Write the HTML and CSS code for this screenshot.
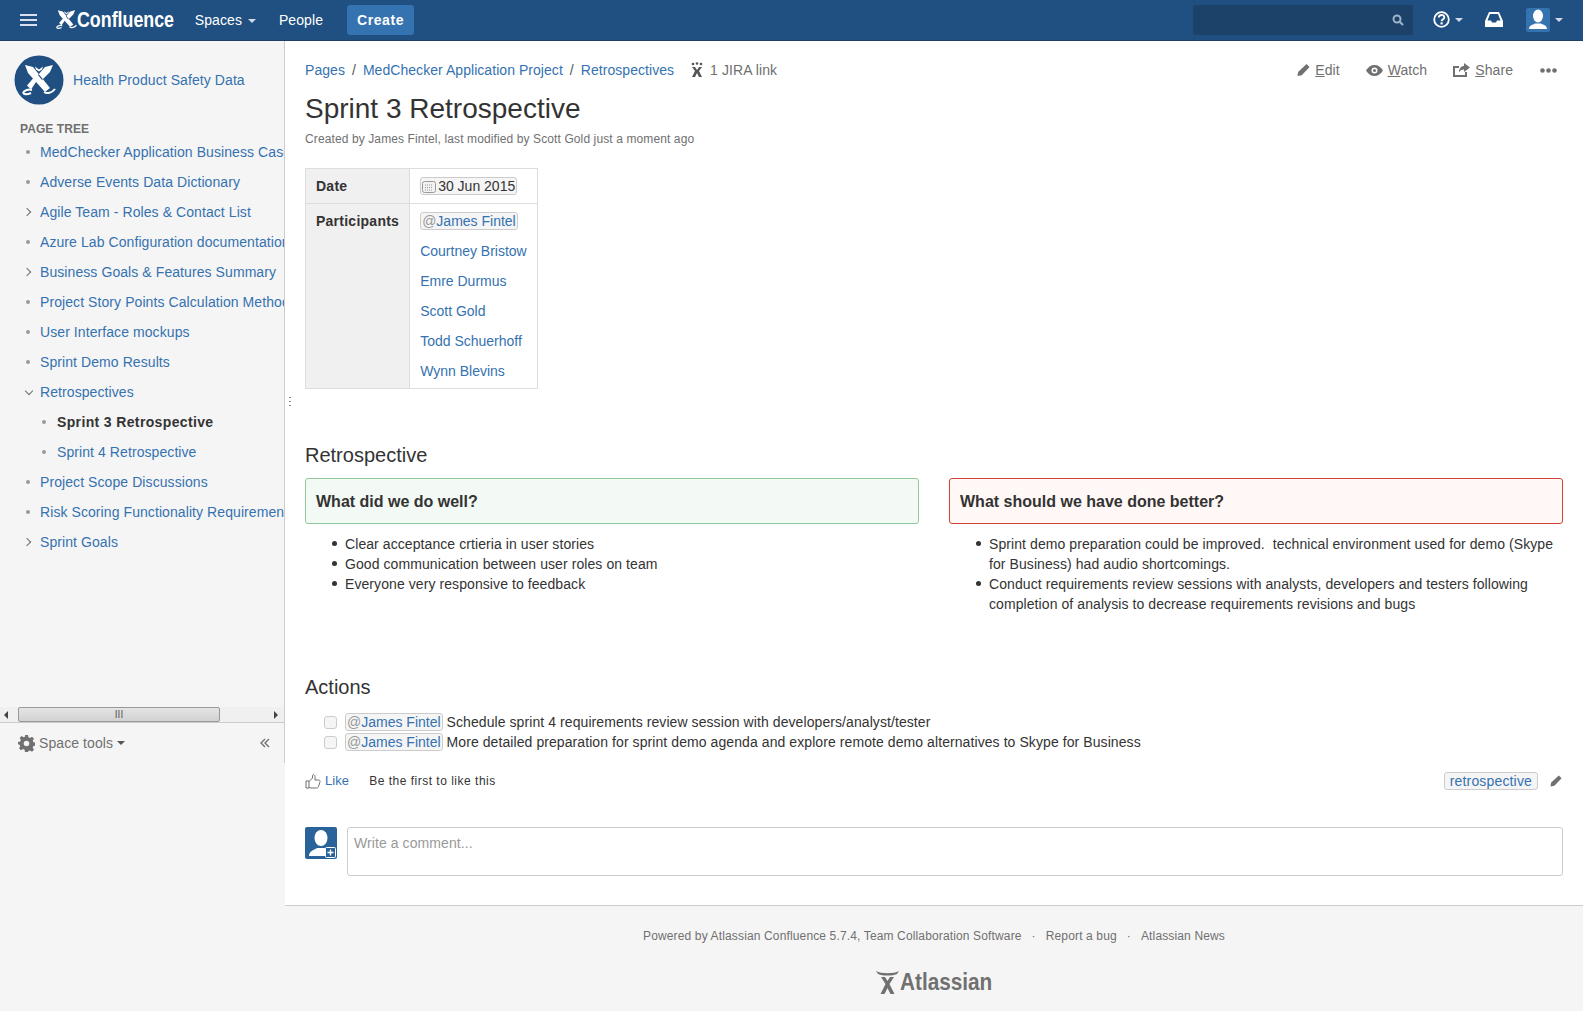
FILE: index.html
```html
<!DOCTYPE html>
<html lang="en">
  <head>
    <meta charset="UTF-8" />
    <meta name="viewport" content="width=device-width, initial-scale=1.0" />
    <title>Sprint 3 Retrospective</title>
    <link rel="stylesheet" href="styles.css">
  </head>
  <body>
    <!-- top bar -->
    <header class="topbar">
      <svg class="burger" width="17" height="12" viewBox="0 0 17 12"><path d="M0 1h17M0 6h17M0 11h17" stroke="#d7e2ee" stroke-width="2"/></svg>
      <a class="brand">
        <svg class="brand-mark" width="21" height="21" viewBox="8 9 34 32">
          <path id="mark" d="M11 10l8 2 17 21-5 4-17-19zM39 10l-8 2-7 8 4 5 8-8zM22 27l-3-3.500-6 7 4 4zM21 11.500l4 3 4-3-1 3-3 2-3-2z" fill="#fff"/>
          <path d="M9 38c1-3 6-4 9-3M9 38c2 2 6 1 8 0M30 37c3 2 8 1 11-3" fill="none" stroke="#fff" stroke-width="2"/>
        </svg>
        <span>Confluence</span>
      </a>
      <nav class="topnav">
        <a>Spaces <i class="caret"></i></a>
        <a>People</a>
        <a class="create">Create</a>
      </nav>
      <div class="topright">
        <div class="search">
          <svg width="12" height="12" viewBox="0 0 12 12"><circle cx="5" cy="5" r="3.500" fill="none" stroke="#9fb3c8" stroke-width="2"/><path d="M7.500 7.500l3.500 3.500" stroke="#9fb3c8" stroke-width="2.200"/></svg>
        </div>
        <a class="topicon help">
          <svg width="17" height="17" viewBox="0 0 17 17"><circle cx="8.500" cy="8.500" r="7.300" fill="none" stroke="#fff" stroke-width="1.800"/><path d="M5.800 6.600c0-3.400 5.500-3.400 5.500-.200 0 1.900-2.700 1.900-2.700 3.900" fill="none" stroke="#fff" stroke-width="1.900"/><path d="M7.500 11.300h2.200v2.100H7.500z" fill="#fff"/></svg>
          <i class="caret"></i>
        </a>
        <a class="topicon inbox">
          <svg width="18" height="15" viewBox="0 0 18 15"><path d="M4 0h10l4 9v6H0V9zM5 2L2.500 8.500h3.500l1 2h4l1-2h3.500L13 2z" fill="#fff" fill-rule="evenodd"/></svg>
        </a>
        <a class="topicon user">
          <span class="user-pic">
            <svg width="24" height="24" viewBox="0 0 24 24"><ellipse cx="12" cy="8" rx="5" ry="6.500" fill="#fff"/><path d="M3 21c0-4 4-4 6-5.500h6c2 1.500 6 1.500 6 5.500z" fill="#fff"/></svg>
          </span>
          <i class="caret"></i>
        </a>
      </div>
    </header>

    <div class="layout">
      <!-- left side -->
      <aside class="sidebar">
        <div class="sidebar-inner">
          <div class="space-head">
            <svg width="50" height="50" viewBox="0 0 50 50">
              <circle cx="25" cy="25" r="24.500" fill="#205081"/>
              <path d="M11 10l8 2 17 21-5 4-17-19zM39 10l-8 2-7 8 4 5 8-8zM22 27l-3-3.500-6 7 4 4zM21 11.500l4 3 4-3-1 3-3 2-3-2z" fill="#fff"/>
              <path d="M9 38c1-3 6-4 9-3M9 38c2 2 6 1 8 0M30 37c3 2 8 1 11-3" fill="none" stroke="#fff" stroke-width="2"/>
            </svg>
            <a>Health Product Safety Data</a>
          </div>
          <h5 class="tree-title">PAGE TREE</h5>
          <ul class="tree">
            <li><i class="dot"></i><a>MedChecker Application Business Case</a></li>
            <li><i class="dot"></i><a>Adverse Events Data Dictionary</a></li>
            <li><i class="chev"></i><a>Agile Team - Roles &amp; Contact List</a></li>
            <li><i class="dot"></i><a>Azure Lab Configuration documentation</a></li>
            <li><i class="chev"></i><a>Business Goals &amp; Features Summary</a></li>
            <li><i class="dot"></i><a>Project Story Points Calculation Method</a></li>
            <li><i class="dot"></i><a>User Interface mockups</a></li>
            <li><i class="dot"></i><a>Sprint Demo Results</a></li>
            <li><i class="chev open"></i><a>Retrospectives</a></li>
            <li class="sub current"><i class="dot"></i><a>Sprint 3 Retrospective</a></li>
            <li class="sub"><i class="dot"></i><a>Sprint 4 Retrospective</a></li>
            <li><i class="dot"></i><a>Project Scope Discussions</a></li>
            <li><i class="dot"></i><a>Risk Scoring Functionality Requirements</a></li>
            <li><i class="chev"></i><a>Sprint Goals</a></li>
          </ul>
          <div class="hscroll">
            <i class="arrow-left"></i>
            <div class="thumb"><span>III</span></div>
            <i class="arrow-right"></i>
          </div>
          <div class="space-tools">
            <svg width="17" height="17" viewBox="0 0 17 17"><path d="M7 0h3l.4 2.300 1.600.7 2-1.300 2 2-1.300 2 .7 1.600 2.300.4v3l-2.300.4-.7 1.600 1.300 2-2 2-2-1.300-1.600.7L10 17H7l-.4-2.300-1.600-.7-2 1.300-2-2 1.300-2-.7-1.600L-.1 9.300V7l2.300-.4.7-1.600-1.300-2 2-2 2 1.300 1.600-.7zM8.500 5.700a2.800 2.800 0 100 5.600 2.800 2.800 0 000-5.600z" fill="#707070" fill-rule="evenodd"/></svg>
            <span>Space tools</span><i class="caret dark"></i>
            <svg class="collapse" width="10" height="10" viewBox="0 0 10 10"><path d="M5 1L1 5l4 4M9 1L5 5l4 4" fill="none" stroke="#707070" stroke-width="1.400"/></svg>
          </div>
        </div>
      </aside>

      <div class="splitter"></div>

      <main class="main">
        <div class="content">
          <div class="page-top">
            <ol class="crumbs">
              <li><a>Pages</a></li>
              <li>/</li>
              <li><a>MedChecker Application Project</a></li>
              <li>/</li>
              <li><a>Retrospectives</a></li>
            </ol>
            <span class="jira">
              <svg width="14" height="16" viewBox="0 0 14 16"><circle cx="3" cy="2" r="1.300" fill="#555"/><circle cx="7" cy="1.500" r="1.300" fill="#555"/><circle cx="11" cy="2" r="1.300" fill="#555"/><path d="M2 5h3l2 3 2-3h3L9 9l3 6H9L7 11l-2 4H2l3-6z" fill="#555"/></svg>
              1 JIRA link
            </span>
            <div class="page-actions">
              <a><svg width="13" height="14" viewBox="0 0 15 15"><path d="M11 .5l3.500 3.500-9 9.500L.5 14.500l1-5z" fill="#707070"/></svg><span><u>E</u>dit</span></a>
              <a><svg width="17" height="11" viewBox="0 0 17 11"><path d="M0 5.500C2 2 5 0 8.500 0S15 2 17 5.500C15 9 12 11 8.500 11S2 9 0 5.500zM8.500 2.500a3 3 0 100 6 3 3 0 000-6z" fill="#707070" fill-rule="evenodd"/><circle cx="8.500" cy="5.500" r="1.500" fill="#707070"/></svg><span><u>W</u>atch</span></a>
              <a><svg width="17" height="14" viewBox="0 0 17 14"><path d="M0 3h6v2H2v7h10V9h2v5H0z" fill="#707070"/><path d="M11 0l6 4.500-6 4.500V6.500c-2.500 0-4 1-5 3 0-4 2-6.500 5-6.500z" fill="#707070"/></svg><span><u>S</u>hare</span></a>
              <a class="more"><svg width="17" height="5" viewBox="0 0 17 5"><circle cx="2.500" cy="2.500" r="2.300" fill="#707070"/><circle cx="8.500" cy="2.500" r="2.300" fill="#707070"/><circle cx="14.500" cy="2.500" r="2.300" fill="#707070"/></svg></a>
            </div>
          </div>

          <h1 class="page-title">Sprint 3 Retrospective</h1>
          <p class="byline">Created by James Fintel, last modified by Scott Gold just a moment ago</p>

          <table class="meta">
            <tr>
              <th>Date</th>
              <td>
                <span class="lozenge date">
                  <svg width="14" height="13" viewBox="0 0 14 13"><rect x=".5" y="1.500" width="13" height="11" rx="2" fill="#f2f2f2" stroke="#999"/><path d="M3 5h8M3 7.500h8M3 10h8" stroke="#999" stroke-dasharray="1 1"/></svg>30 Jun 2015
                </span>
              </td>
            </tr>
            <tr>
              <th>Participants</th>
              <td class="people">
                <div><a class="lozenge mention"><em>@</em>James Fintel</a></div>
                <div><a>Courtney Bristow</a></div>
                <div><a>Emre Durmus</a></div>
                <div><a>Scott Gold</a></div>
                <div><a>Todd Schuerhoff</a></div>
                <div><a>Wynn Blevins</a></div>
              </td>
            </tr>
          </table>

          <h2 class="section retro-head">Retrospective</h2>
          <div class="columns">
            <div>
              <div class="panel good"><h3>What did we do well?</h3></div>
              <ul class="notes">
                <li>Clear acceptance crtieria in user stories</li>
                <li>Good communication between user roles on team</li>
                <li>Everyone very responsive to feedback</li>
              </ul>
            </div>
            <div>
              <div class="panel bad"><h3>What should we have done better?</h3></div>
              <ul class="notes">
                <li>Sprint demo preparation could be improved.&nbsp; technical environment used for demo (Skype for Business) had audio shortcomings.</li>
                <li>Conduct requirements review sessions with analysts, developers and testers following completion of analysis to decrease requirements revisions and bugs</li>
              </ul>
            </div>
          </div>

          <h2 class="section actions-head">Actions</h2>
          <ul class="tasks">
            <li><i class="check"></i><a class="lozenge mention"><em>@</em>James Fintel</a> Schedule sprint 4 requirements review session with developers/analyst/tester</li>
            <li><i class="check"></i><a class="lozenge mention"><em>@</em>James Fintel</a> More detailed preparation for sprint demo agenda and explore remote demo alternatives to Skype for Business</li>
          </ul>

          <div class="like-row">
            <a class="like">
              <svg width="16" height="15" viewBox="0 0 16 15"><path d="M1 7h3v7H1zM4 7.500L7.500 4V1.500c0-1.500 2.500-1 2.500 1V6h3.500c1.500 0 1.800 1.200 1.300 2.500l-1.300 4c-.3 1-1 1.500-2 1.500H6c-1 0-1.500-.5-2-1" fill="none" stroke="#707070"/></svg>
              Like
            </a>
            <span class="like-note">Be the first to like this</span>
            <div class="labels">
              <a class="tag">retrospective</a>
              <svg width="12" height="12" viewBox="0 0 15 15"><path d="M11 .5l3.500 3.500-9 9.500L.5 14.500l1-5z" fill="#707070"/></svg>
            </div>
          </div>

          <div class="comment-row">
            <span class="comment-pic">
              <svg width="32" height="32" viewBox="0 0 32 32"><rect width="32" height="32" rx="2" fill="#2a6399"/><ellipse cx="16" cy="11" rx="6.500" ry="8" fill="#fff"/><path d="M4 29c0-5 5-6 8-8h8c3 2 8 3 8 8z" fill="#fff"/><rect x="20.500" y="20.500" width="10" height="10" rx="1" fill="#2a6399" stroke="#fff"/><path d="M25.500 22.500v6M22.500 25.500h6" stroke="#fff" stroke-width="1.400"/></svg>
            </span>
            <div class="comment-box">Write a comment...</div>
          </div>
        </div>

        <footer class="footer">
          <ul>
            <li>Powered by Atlassian Confluence 5.7.4, Team Collaboration Software</li>
            <li>Report a bug</li>
            <li>Atlassian News</li>
          </ul>
          <div class="footer-logo">
            <svg width="25" height="25" viewBox="0 0 25 25"><path d="M1 1c5 3 18 3 23 0l-2 3c-5 2-14 2-19 0zM6 7h4l2.500 4L15 7h4l-4.500 7 5 10h-4l-3-6-3 6h-4l5-10z" fill="#707070"/></svg>
            <span>Atlassian</span>
          </div>
        </footer>
      </main>
    </div>
  </body>
</html>
```

FILE: styles.css
```css
/* page */
* {
  box-sizing: border-box;
}

html,
body {
  height: 100%;
}

body {
  margin: 0;
  font-family: "Liberation Sans", Arial, sans-serif;
  font-size: 14px;
  line-height: 20px;
  letter-spacing: 0.08px;
  color: #333;
  background-color: #f5f5f5;
  overflow: hidden;
}

a {
  color: #3572b0;
  text-decoration: none;
}

ul,
ol {
  margin: 0;
  padding: 0;
  list-style: none;
}

/* top bar */
.topbar {
  display: flex;
  align-items: center;
  height: 41px;
  padding: 0 20px 1px 20px;
  background-color: #205081;
  border-bottom: 1px solid #1c3f63;
  color: #fff;
}

.brand {
  display: flex;
  align-items: center;
  margin-left: 19px;
  color: #fff;
}

.brand span {
  display: inline-block;
  margin-right: -19px;
  font-size: 22px;
  font-weight: bold;
  letter-spacing: 0;
  transform: scaleX(0.81);
  transform-origin: left;
}

.topnav {
  display: flex;
  align-items: center;
  margin-left: 17px;
}

.topnav a {
  color: #fff;
  margin-right: 23px;
}

.topnav .create {
  width: 67px;
  height: 30px;
  margin-left: 1px;
  line-height: 30px;
  text-align: center;
  font-weight: bold;
  letter-spacing: 0.6px;
  background-color: #3572b0;
  border-radius: 3px;
}

.caret {
  display: inline-block;
  width: 0;
  height: 0;
  margin-left: 2px;
  vertical-align: middle;
  border: 4px solid transparent;
  border-top-color: #d0dbe7;
  border-bottom-width: 0;
}

.caret.dark {
  border-top-color: #555;
  margin-left: 4px;
}

.topright {
  display: flex;
  align-items: center;
  margin-left: auto;
}

.search {
  display: flex;
  align-items: center;
  justify-content: flex-end;
  width: 220px;
  height: 30px;
  padding-right: 9px;
  background-color: #1c4269;
  border-radius: 3px;
}

.topicon {
  display: flex;
  align-items: center;
}

.help {
  margin-left: 20px;
}

.help .caret {
  margin-left: 5px;
}

.inbox {
  margin-left: 22px;
}

.user {
  margin-left: 23px;
}

.user .caret {
  margin-left: 5px;
}

.user-pic {
  display: block;
  width: 24px;
  height: 24px;
  background-color: #3572b0;
  border-radius: 2px;
}

.user-pic svg {
  display: block;
}

/* columns under the bar */
.layout {
  position: relative;
  display: flex;
  height: 970px;
}

.sidebar {
  flex: 0 0 285px;
  min-width: 0;
}

.sidebar-inner {
  display: flex;
  flex-direction: column;
  height: 722px;
  border-right: 1px solid #ccc;
  overflow: hidden;
}

.space-head {
  display: flex;
  align-items: center;
  padding: 14px 0 0 14px;
}

.space-head a {
  margin-left: 9px;
}

.tree-title {
  margin: 17px 0 0 20px;
  font-size: 12px;
  line-height: 14px;
  color: #707070;
}

.tree {
  flex: 1;
  margin-top: 1px;
  padding-left: 20px;
  overflow: hidden;
}

.tree li {
  position: relative;
  height: 30px;
  padding-left: 20px;
  line-height: 30px;
  white-space: nowrap;
}

.tree li.sub {
  padding-left: 37px;
}

.tree .current a {
  color: #333;
  font-weight: bold;
  letter-spacing: 0.36px;
}

.dot {
  position: absolute;
  left: 6px;
  top: 13px;
  width: 4px;
  height: 4px;
  border-radius: 50%;
  background-color: #999;
}

.sub .dot {
  left: 22px;
}

.chev {
  position: absolute;
  left: 4px;
  top: 12px;
  width: 6px;
  height: 6px;
  border-top: 1.5px solid #707070;
  border-right: 1.5px solid #707070;
  transform: rotate(45deg);
}

.chev.open {
  left: 6px;
  top: 11px;
  transform: rotate(135deg);
}

/* sideways scrollbar of the tree */
.hscroll {
  display: flex;
  align-items: center;
  justify-content: space-between;
  height: 16px;
  padding: 0 6px 0 4px;
  background-color: #f0f0f0;
  border-bottom: 1px solid #ccc;
}

.arrow-left,
.arrow-right {
  width: 0;
  height: 0;
  border: 4px solid transparent;
}

.arrow-left {
  border-right-color: #444;
  border-left-width: 0;
}

.arrow-right {
  border-left-color: #444;
  border-right-width: 0;
}

.thumb {
  width: 202px;
  height: 15px;
  margin: 0 auto 0 10px;
  font-size: 10px;
  line-height: 13px;
  text-align: center;
  color: #555;
  background: linear-gradient(#e4e4e4, #d2d2d2);
  border: 1px solid #999;
  border-radius: 2px;
}

.space-tools {
  display: flex;
  align-items: center;
  height: 40px;
  padding: 0 14px 0 18px;
  color: #707070;
}

.space-tools span {
  margin-left: 4px;
}

.collapse {
  margin-left: auto;
}

.splitter {
  position: absolute;
  left: 289px;
  top: 356px;
  width: 2px;
  height: 11px;
  background: repeating-linear-gradient(#888 0 1px, transparent 1px 4px);
}

/* page */
.main {
  flex: 1;
  display: flex;
  flex-direction: column;
  min-width: 0;
}

.content {
  height: 865px;
  padding: 19px 20px 0;
  background-color: #fff;
  border-bottom: 1px solid #ccc;
}

.page-top {
  display: flex;
  align-items: center;
  height: 20px;
}

.crumbs {
  display: flex;
  color: #555;
  letter-spacing: 0.05px;
}

.crumbs li {
  margin-right: 7px;
}

.jira {
  display: flex;
  align-items: center;
  margin-left: 9px;
  color: #707070;
}

.jira svg {
  margin-right: 6px;
}

.page-actions {
  display: flex;
  align-items: center;
  margin-left: auto;
  padding-right: 6px;
}

.page-actions a {
  display: flex;
  align-items: center;
  margin-left: 26px;
  color: #707070;
}

.page-actions .more {
  margin-left: 27px;
}

.page-actions svg {
  margin-right: 5px;
}

.page-actions .more svg {
  margin-right: 0;
}

.page-title {
  margin: 11px 0 0;
  font-size: 28px;
  font-weight: normal;
  line-height: 36px;
  letter-spacing: 0;
}

.byline {
  margin: 2px 0 0;
  font-size: 12px;
  line-height: 20px;
  letter-spacing: 0.11px;
  color: #707070;
}

/* details table */
.meta {
  margin-top: 19px;
  border-collapse: collapse;
}

.meta th,
.meta td {
  padding: 7px 10px;
  text-align: left;
  vertical-align: top;
  border: 1px solid #ddd;
}

.meta th {
  width: 104px;
  letter-spacing: 0.25px;
  background-color: #f0f0f0;
}

.meta td {
  letter-spacing: 0;
}

.meta .people {
  padding-bottom: 0;
}

.people div {
  height: 30px;
}

.people div:last-child {
  height: 27px;
}

.lozenge {
  display: inline-block;
  height: 18px;
  padding: 0 1px;
  line-height: 16px;
  letter-spacing: 0;
  background-color: #f5f5f5;
  border: 1px solid #ccc;
  border-radius: 3px;
}

.date svg {
  vertical-align: -2px;
  margin-right: 2px;
}

.mention em {
  font-style: normal;
  color: #999;
}

.section {
  margin: 0;
  font-size: 20px;
  font-weight: normal;
  line-height: 28px;
  letter-spacing: 0;
}

.retro-head {
  margin-top: 52px;
}

.columns {
  display: grid;
  grid-template-columns: 1fr 1fr;
  gap: 30px;
  margin-top: 9px;
  height: 195px;
}

.panel {
  height: 46px;
  padding: 0 10px;
  border: 1px solid;
  border-radius: 3px;
}

.panel h3 {
  margin: 0;
  font-size: 16px;
  line-height: 45px;
  letter-spacing: 0;
}

.good {
  background-color: #f3f9f4;
  border-color: #91c89c;
}

.bad {
  background-color: #fff8f7;
  border-color: #d04437;
}

.notes {
  margin-top: 10px;
  padding-left: 40px;
}

.notes li {
  position: relative;
}

.notes li::before {
  content: "";
  position: absolute;
  left: -13px;
  top: 7px;
  width: 5px;
  height: 5px;
  border-radius: 50%;
  background-color: #333;
}

/* action items */
.tasks {
  margin-top: 11px;
  padding-left: 19px;
}

.tasks li {
  display: flex;
  align-items: center;
  height: 20px;
  white-space: pre;
}

.check {
  width: 13px;
  height: 13px;
  margin-right: 8px;
  background-color: #f5f5f5;
  border: 1px solid #ccc;
  border-radius: 3px;
}

.like-row {
  display: flex;
  align-items: center;
  margin-top: 19px;
  height: 20px;
  font-size: 13px;
}

.like {
  display: flex;
  align-items: center;
}

.like svg {
  margin-right: 4px;
}

.like-note {
  margin-left: 20px;
  font-size: 12px;
  letter-spacing: 0.5px;
}

.labels {
  display: flex;
  align-items: center;
  margin-left: auto;
}

.tag {
  height: 18px;
  padding: 0 5px;
  font-size: 14px;
  line-height: 17px;
  letter-spacing: 0.16px;
  background-color: #f5f5f5;
  border: 1px solid #ccc;
  border-radius: 3px;
}

.labels svg {
  margin-left: 12px;
  margin-right: 1px;
}

.comment-row {
  display: flex;
  margin-top: 36px;
}

.comment-pic svg {
  display: block;
}

.comment-box {
  flex: 1;
  height: 49px;
  margin-left: 10px;
  padding: 5px 6px;
  color: #999;
  background-color: #fff;
  border: 1px solid #ccc;
  border-radius: 3px;
}

/* footer */
.footer {
  padding-top: 20px;
  font-size: 12px;
  letter-spacing: 0.14px;
  color: #707070;
  text-align: center;
}

.footer ul {
  display: flex;
  justify-content: center;
}

.footer li + li::before {
  content: "\00b7";
  margin: 0 10px;
}

.footer-logo {
  display: flex;
  align-items: center;
  justify-content: center;
  margin-top: 23px;
}

.footer-logo span {
  display: inline-block;
  margin-right: -14px;
  font-size: 24px;
  font-weight: bold;
  line-height: 26px;
  letter-spacing: 0;
  transform: scaleX(0.865);
  transform-origin: left;
}
```
